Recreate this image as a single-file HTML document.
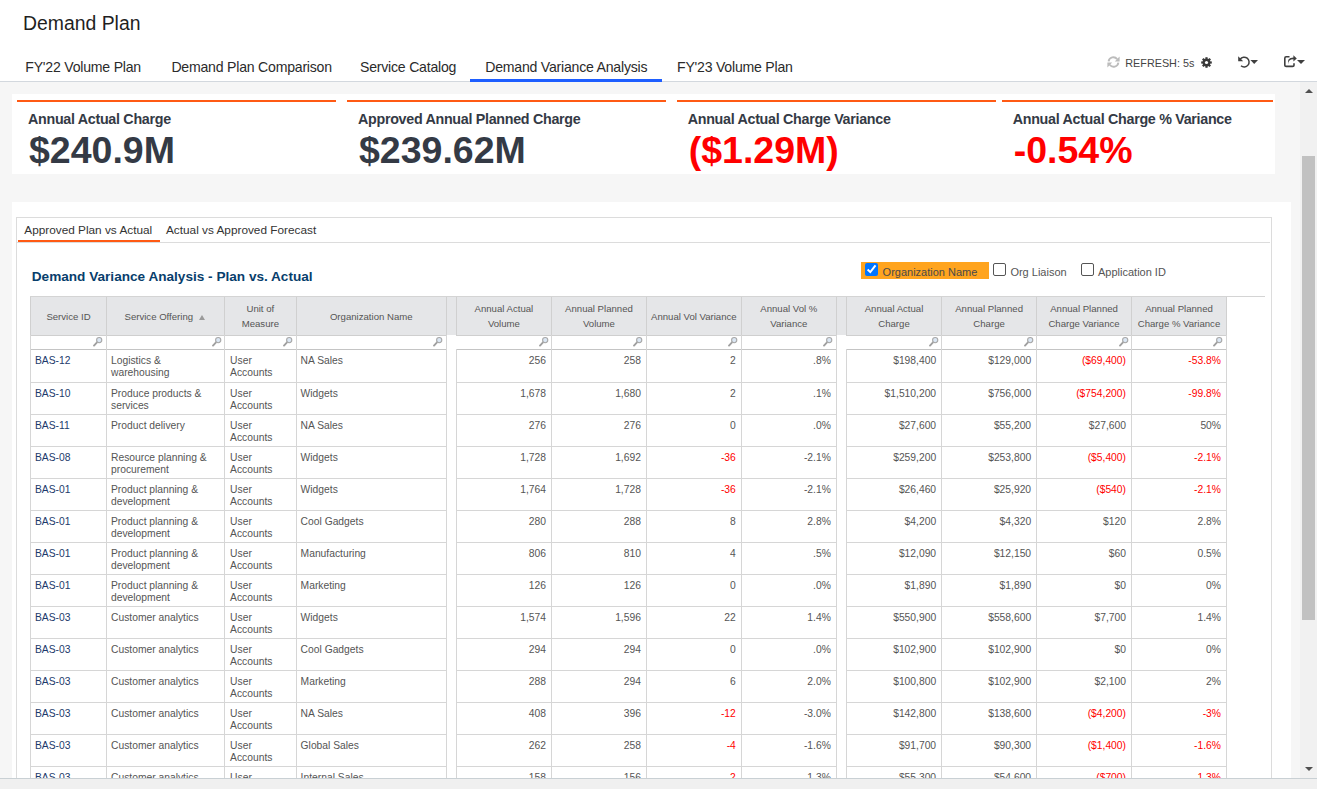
<!DOCTYPE html>
<html><head><meta charset="utf-8"><style>
html,body{margin:0;padding:0;}
body{width:1317px;height:789px;overflow:hidden;position:relative;font-family:"Liberation Sans", sans-serif;background:#fff;}
body>div{position:absolute;box-sizing:content-box;}
.t{white-space:nowrap;}
</style></head><body>
<div style="left:0px;top:0px;width:1317px;height:81px;background:#ffffff;"></div>
<div style="left:0px;top:81px;width:1317px;height:1px;background:#d3d8de;"></div>
<div style="left:0px;top:82px;width:1300px;height:696px;background:#f6f6f6;"></div>
<div style="left:1300px;top:82px;width:17px;height:696px;background:#f1f1f1;"></div>
<div style="left:1302px;top:156px;width:13px;height:464px;background:#c1c1c1;"></div>
<div style="left:1304.5px;top:88.5px;width:0;height:0;border-left:4px solid transparent;border-right:4px solid transparent;border-bottom:4.5px solid #505050;background:transparent"></div>
<div style="left:1304.5px;top:766.5px;width:0;height:0;border-left:4px solid transparent;border-right:4px solid transparent;border-top:4.5px solid #505050;background:transparent"></div>
<div id="title" class="t" style="left:23px;top:14.08px;font-size:19.4px;line-height:19.4px;color:#1f1f1f;font-weight:normal;">Demand Plan</div>
<div id="tab0" class="t" style="left:25.3px;top:60.46px;font-size:14.1px;line-height:14.1px;color:#2b2b2b;font-weight:normal;letter-spacing:-0.22px">FY'22 Volume Plan</div>
<div id="tab1" class="t" style="left:171.4px;top:60.46px;font-size:14.1px;line-height:14.1px;color:#2b2b2b;font-weight:normal;letter-spacing:-0.22px">Demand Plan Comparison</div>
<div id="tab2" class="t" style="left:360px;top:60.46px;font-size:14.1px;line-height:14.1px;color:#2b2b2b;font-weight:normal;letter-spacing:-0.22px">Service Catalog</div>
<div id="tab3" class="t" style="left:485.2px;top:60.46px;font-size:14.1px;line-height:14.1px;color:#2b2b2b;font-weight:normal;letter-spacing:-0.22px">Demand Variance Analysis</div>
<div id="tab4" class="t" style="left:677px;top:60.46px;font-size:14.1px;line-height:14.1px;color:#2b2b2b;font-weight:normal;letter-spacing:-0.22px">FY'23 Volume Plan</div>
<div style="left:470px;top:79px;width:192px;height:3px;background:#1e5eff;"></div>
<div id="refresh" class="t" style="left:1125.3px;top:58.36px;font-size:10.8px;line-height:10.8px;color:#444;font-weight:normal;">REFRESH: 5s</div>
<svg style="position:absolute;left:1107px;top:56px" width="13" height="12" viewBox="0 0 13 12"><path d="M1.6 5.4 A4.8 4.8 0 0 1 10.2 3.2" stroke="#bcbcbc" stroke-width="1.9" fill="none"/><path d="M12.6 0.6 L12.6 5.4 L7.8 5.4 Z" fill="#bcbcbc"/><path d="M11.4 6.6 A4.8 4.8 0 0 1 2.8 8.8" stroke="#bcbcbc" stroke-width="1.9" fill="none"/><path d="M0.4 11.4 L0.4 6.6 L5.2 6.6 Z" fill="#bcbcbc"/></svg>
<svg style="position:absolute;left:1201px;top:57px" width="11" height="11" viewBox="0 0 11 11"><g fill="#3a3a3a" transform="translate(5.5 5.5)"><circle r="3.9"/><rect x="-1.1" y="-5.3" width="2.2" height="10.6"/><rect x="-5.3" y="-1.1" width="10.6" height="2.2"/><rect x="-1.1" y="-5.3" width="2.2" height="10.6" transform="rotate(45)"/><rect x="-1.1" y="-5.3" width="2.2" height="10.6" transform="rotate(-45)"/></g><circle cx="5.5" cy="5.5" r="1.6" fill="#fff"/></svg>
<svg style="position:absolute;left:1237px;top:55px" width="22" height="14" viewBox="0 0 22 14"><path d="M3.2 4.2 A4.9 4.9 0 1 1 4.0 10.8" stroke="#3f3f3f" stroke-width="1.5" fill="none"/><path d="M1.2 1.2 L1.2 6.2 L6.2 6.2 Z" fill="#3f3f3f"/><path d="M13.4 5.0 L21 5.0 L17.2 9.0 Z" fill="#3f3f3f"/></svg>
<svg style="position:absolute;left:1283px;top:54px" width="23" height="14" viewBox="0 0 23 14"><path d="M6.5 2.8 L3.2 2.8 Q1.8 2.8 1.8 4.2 L1.8 11.2 Q1.8 12.4 3.2 12.4 L9.6 12.4 Q11 12.4 11 11.2 L11 9.2" stroke="#3f3f3f" stroke-width="1.6" fill="none"/><path d="M5.2 10.2 Q5.2 5.2 10.4 5.2 L10.4 7.6 L13.8 4.4 L10.4 1.2 L10.4 3.4 Q3.6 3.4 5.2 10.2 Z" fill="#3f3f3f"/><path d="M14 6.0 L22 6.0 L18 10.0 Z" fill="#3f3f3f"/></svg>
<div style="left:12px;top:94px;width:1263px;height:80px;background:#ffffff;"></div>
<div style="left:17px;top:100px;width:319px;height:2px;background:#ff5a14;"></div>
<div id="kl0" class="t" style="left:28px;top:111.7px;font-size:14.3px;line-height:14.3px;color:#343a45;font-weight:bold;letter-spacing:-0.3px">Annual Actual Charge</div>
<div id="kv0" class="t" style="left:29px;top:131.76px;font-size:37.5px;line-height:37.5px;color:#343a45;font-weight:bold;">$240.9M</div>
<div style="left:347px;top:100px;width:319px;height:2px;background:#ff5a14;"></div>
<div id="kl1" class="t" style="left:358px;top:111.7px;font-size:14.3px;line-height:14.3px;color:#343a45;font-weight:bold;letter-spacing:-0.3px">Approved Annual Planned Charge</div>
<div id="kv1" class="t" style="left:359px;top:131.76px;font-size:37.5px;line-height:37.5px;color:#343a45;font-weight:bold;">$239.62M</div>
<div style="left:676.7px;top:100px;width:319px;height:2px;background:#ff5a14;"></div>
<div id="kl2" class="t" style="left:687.7px;top:111.7px;font-size:14.3px;line-height:14.3px;color:#343a45;font-weight:bold;letter-spacing:-0.3px">Annual Actual Charge Variance</div>
<div id="kv2" class="t" style="left:688.7px;top:131.76px;font-size:37.5px;line-height:37.5px;color:#ff0000;font-weight:bold;">($1.29M)</div>
<div style="left:1001.7px;top:100px;width:271.3px;height:2px;background:#ff5a14;"></div>
<div id="kl3" class="t" style="left:1012.7px;top:111.7px;font-size:14.3px;line-height:14.3px;color:#343a45;font-weight:bold;letter-spacing:-0.3px">Annual Actual Charge % Variance</div>
<div id="kv3" class="t" style="left:1013.7px;top:131.76px;font-size:37.5px;line-height:37.5px;color:#ff0000;font-weight:bold;">-0.54%</div>
<div style="left:12px;top:202px;width:1279px;height:576px;background:#ffffff;"></div>
<div style="left:16px;top:217px;width:1254px;height:600px;border:1px solid #dcdcdc;background:transparent"></div>
<div style="left:17px;top:242px;width:1253px;height:1px;background:#dcdcdc;"></div>
<div style="left:18px;top:240px;width:142px;height:2px;background:#ff5a14;"></div>
<div id="itab0" class="t" style="left:24.3px;top:224.81px;font-size:11.8px;line-height:11.8px;color:#333;font-weight:normal;">Approved Plan vs Actual</div>
<div id="itab1" class="t" style="left:166px;top:224.81px;font-size:11.8px;line-height:11.8px;color:#333;font-weight:normal;">Actual vs Approved Forecast</div>
<div id="sectitle" class="t" style="left:31.8px;top:269.99px;font-size:13.6px;line-height:13.6px;color:#083e6c;font-weight:bold;">Demand Variance Analysis - Plan vs. Actual</div>
<div style="left:861px;top:262px;width:128px;height:17px;background:#ffa41e;"></div>
<div style="left:865px;top:263px;width:13px;height:13px;background:#0075ff;border-radius:2px"></div>
<svg style="position:absolute;left:865px;top:263px" width="13" height="13"><path d="M2.6 6.5 L5.3 9.1 L10.5 2.4" stroke="#fff" stroke-width="2" fill="none"/></svg>
<div id="cb0" class="t" style="left:882.6px;top:266.99px;font-size:11px;line-height:11px;color:#4a4a4a;font-weight:normal;">Organization Name</div>
<div style="left:993px;top:263px;width:11px;height:11px;border:1px solid #555;border-radius:2px;background:#fff"></div>
<div id="cb1" class="t" style="left:1010.4px;top:266.99px;font-size:11px;line-height:11px;color:#555;font-weight:normal;">Org Liaison</div>
<div style="left:1081px;top:263px;width:11px;height:11px;border:1px solid #555;border-radius:2px;background:#fff"></div>
<div id="cb2" class="t" style="left:1098px;top:266.99px;font-size:11px;line-height:11px;color:#555;font-weight:normal;">Application ID</div>
<div style="left:30px;top:296px;width:1197px;height:39px;background:#e5e6e8;"></div>
<div style="left:30px;top:296px;width:1px;height:39px;background:#d0d0d0;"></div>
<div style="left:106px;top:296px;width:1px;height:39px;background:#d0d0d0;"></div>
<div style="left:224px;top:296px;width:1px;height:39px;background:#d0d0d0;"></div>
<div style="left:296px;top:296px;width:1px;height:39px;background:#d0d0d0;"></div>
<div style="left:446px;top:296px;width:1px;height:39px;background:#d0d0d0;"></div>
<div style="left:456px;top:296px;width:1px;height:39px;background:#d0d0d0;"></div>
<div style="left:551px;top:296px;width:1px;height:39px;background:#d0d0d0;"></div>
<div style="left:646px;top:296px;width:1px;height:39px;background:#d0d0d0;"></div>
<div style="left:741px;top:296px;width:1px;height:39px;background:#d0d0d0;"></div>
<div style="left:836px;top:296px;width:1px;height:39px;background:#d0d0d0;"></div>
<div style="left:846px;top:296px;width:1px;height:39px;background:#d0d0d0;"></div>
<div style="left:941px;top:296px;width:1px;height:39px;background:#d0d0d0;"></div>
<div style="left:1036px;top:296px;width:1px;height:39px;background:#d0d0d0;"></div>
<div style="left:1131px;top:296px;width:1px;height:39px;background:#d0d0d0;"></div>
<div style="left:1226px;top:296px;width:1px;height:39px;background:#d0d0d0;"></div>
<div style="left:30px;top:296px;width:1235px;height:1px;background:#d4d4d4;"></div>
<div class="t" style="left:30.5px;width:76.0px;text-align:center;top:312.37px;font-size:9.6px;line-height:9.6px;color:#555;font-weight:normal;">Service ID</div>
<div class="t" style="left:124.5px;top:312.37px;font-size:9.6px;line-height:9.6px;color:#555;font-weight:normal;">Service Offering</div>
<div style="left:199px;top:315px;width:0;height:0;border-left:3.2px solid transparent;border-right:3.2px solid transparent;border-bottom:5px solid #9a9a9a;background:transparent"></div>
<div class="t" style="left:224.60000000000002px;width:71.50000000000003px;text-align:center;top:304.37px;font-size:9.6px;line-height:9.6px;color:#555;font-weight:normal;">Unit of</div>
<div class="t" style="left:224.60000000000002px;width:71.50000000000003px;text-align:center;top:319.37px;font-size:9.6px;line-height:9.6px;color:#555;font-weight:normal;">Measure</div>
<div class="t" style="left:296.1px;width:150.29999999999995px;text-align:center;top:312.37px;font-size:9.6px;line-height:9.6px;color:#555;font-weight:normal;">Organization Name</div>
<div class="t" style="left:456.29999999999995px;width:95.19999999999999px;text-align:center;top:304.37px;font-size:9.6px;line-height:9.6px;color:#555;font-weight:normal;">Annual Actual</div>
<div class="t" style="left:456.29999999999995px;width:95.19999999999999px;text-align:center;top:319.37px;font-size:9.6px;line-height:9.6px;color:#555;font-weight:normal;">Volume</div>
<div class="t" style="left:551.5px;width:94.89999999999998px;text-align:center;top:304.37px;font-size:9.6px;line-height:9.6px;color:#555;font-weight:normal;">Annual Planned</div>
<div class="t" style="left:551.5px;width:94.89999999999998px;text-align:center;top:319.37px;font-size:9.6px;line-height:9.6px;color:#555;font-weight:normal;">Volume</div>
<div class="t" style="left:646.3999999999999px;width:94.89999999999998px;text-align:center;top:312.37px;font-size:9.6px;line-height:9.6px;color:#555;font-weight:normal;">Annual Vol Variance</div>
<div class="t" style="left:741.3px;width:95.0px;text-align:center;top:304.37px;font-size:9.6px;line-height:9.6px;color:#555;font-weight:normal;">Annual Vol %</div>
<div class="t" style="left:741.3px;width:95.0px;text-align:center;top:319.37px;font-size:9.6px;line-height:9.6px;color:#555;font-weight:normal;">Variance</div>
<div class="t" style="left:846.4px;width:95.20000000000005px;text-align:center;top:304.37px;font-size:9.6px;line-height:9.6px;color:#555;font-weight:normal;">Annual Actual</div>
<div class="t" style="left:846.4px;width:95.20000000000005px;text-align:center;top:319.37px;font-size:9.6px;line-height:9.6px;color:#555;font-weight:normal;">Charge</div>
<div class="t" style="left:941.5999999999999px;width:94.99999999999989px;text-align:center;top:304.37px;font-size:9.6px;line-height:9.6px;color:#555;font-weight:normal;">Annual Planned</div>
<div class="t" style="left:941.5999999999999px;width:94.99999999999989px;text-align:center;top:319.37px;font-size:9.6px;line-height:9.6px;color:#555;font-weight:normal;">Charge</div>
<div class="t" style="left:1036.6px;width:94.90000000000009px;text-align:center;top:304.37px;font-size:9.6px;line-height:9.6px;color:#555;font-weight:normal;">Annual Planned</div>
<div class="t" style="left:1036.6px;width:94.90000000000009px;text-align:center;top:319.37px;font-size:9.6px;line-height:9.6px;color:#555;font-weight:normal;">Charge Variance</div>
<div class="t" style="left:1131.5px;width:95.0px;text-align:center;top:304.37px;font-size:9.6px;line-height:9.6px;color:#555;font-weight:normal;">Annual Planned</div>
<div class="t" style="left:1131.5px;width:95.0px;text-align:center;top:319.37px;font-size:9.6px;line-height:9.6px;color:#555;font-weight:normal;">Charge % Variance</div>
<div style="left:30px;top:335px;width:417px;height:1px;background:#cfcfcf;"></div>
<div style="left:456px;top:335px;width:381px;height:1px;background:#cfcfcf;"></div>
<div style="left:846px;top:335px;width:381px;height:1px;background:#cfcfcf;"></div>
<div style="left:30px;top:349px;width:417px;height:1px;background:#c4c4c4;"></div>
<div style="left:456px;top:349px;width:381px;height:1px;background:#c4c4c4;"></div>
<div style="left:846px;top:349px;width:381px;height:1px;background:#c4c4c4;"></div>
<div style="left:30px;top:382px;width:417px;height:1px;background:#d6d6d6;"></div>
<div style="left:456px;top:382px;width:381px;height:1px;background:#d6d6d6;"></div>
<div style="left:846px;top:382px;width:381px;height:1px;background:#d6d6d6;"></div>
<div style="left:30px;top:414px;width:417px;height:1px;background:#d6d6d6;"></div>
<div style="left:456px;top:414px;width:381px;height:1px;background:#d6d6d6;"></div>
<div style="left:846px;top:414px;width:381px;height:1px;background:#d6d6d6;"></div>
<div style="left:30px;top:446px;width:417px;height:1px;background:#d6d6d6;"></div>
<div style="left:456px;top:446px;width:381px;height:1px;background:#d6d6d6;"></div>
<div style="left:846px;top:446px;width:381px;height:1px;background:#d6d6d6;"></div>
<div style="left:30px;top:478px;width:417px;height:1px;background:#d6d6d6;"></div>
<div style="left:456px;top:478px;width:381px;height:1px;background:#d6d6d6;"></div>
<div style="left:846px;top:478px;width:381px;height:1px;background:#d6d6d6;"></div>
<div style="left:30px;top:510px;width:417px;height:1px;background:#d6d6d6;"></div>
<div style="left:456px;top:510px;width:381px;height:1px;background:#d6d6d6;"></div>
<div style="left:846px;top:510px;width:381px;height:1px;background:#d6d6d6;"></div>
<div style="left:30px;top:542px;width:417px;height:1px;background:#d6d6d6;"></div>
<div style="left:456px;top:542px;width:381px;height:1px;background:#d6d6d6;"></div>
<div style="left:846px;top:542px;width:381px;height:1px;background:#d6d6d6;"></div>
<div style="left:30px;top:574px;width:417px;height:1px;background:#d6d6d6;"></div>
<div style="left:456px;top:574px;width:381px;height:1px;background:#d6d6d6;"></div>
<div style="left:846px;top:574px;width:381px;height:1px;background:#d6d6d6;"></div>
<div style="left:30px;top:606px;width:417px;height:1px;background:#d6d6d6;"></div>
<div style="left:456px;top:606px;width:381px;height:1px;background:#d6d6d6;"></div>
<div style="left:846px;top:606px;width:381px;height:1px;background:#d6d6d6;"></div>
<div style="left:30px;top:638px;width:417px;height:1px;background:#d6d6d6;"></div>
<div style="left:456px;top:638px;width:381px;height:1px;background:#d6d6d6;"></div>
<div style="left:846px;top:638px;width:381px;height:1px;background:#d6d6d6;"></div>
<div style="left:30px;top:670px;width:417px;height:1px;background:#d6d6d6;"></div>
<div style="left:456px;top:670px;width:381px;height:1px;background:#d6d6d6;"></div>
<div style="left:846px;top:670px;width:381px;height:1px;background:#d6d6d6;"></div>
<div style="left:30px;top:702px;width:417px;height:1px;background:#d6d6d6;"></div>
<div style="left:456px;top:702px;width:381px;height:1px;background:#d6d6d6;"></div>
<div style="left:846px;top:702px;width:381px;height:1px;background:#d6d6d6;"></div>
<div style="left:30px;top:734px;width:417px;height:1px;background:#d6d6d6;"></div>
<div style="left:456px;top:734px;width:381px;height:1px;background:#d6d6d6;"></div>
<div style="left:846px;top:734px;width:381px;height:1px;background:#d6d6d6;"></div>
<div style="left:30px;top:766px;width:417px;height:1px;background:#d6d6d6;"></div>
<div style="left:456px;top:766px;width:381px;height:1px;background:#d6d6d6;"></div>
<div style="left:846px;top:766px;width:381px;height:1px;background:#d6d6d6;"></div>
<div style="left:30px;top:798px;width:417px;height:1px;background:#d6d6d6;"></div>
<div style="left:456px;top:798px;width:381px;height:1px;background:#d6d6d6;"></div>
<div style="left:846px;top:798px;width:381px;height:1px;background:#d6d6d6;"></div>
<div style="left:30px;top:335px;width:1px;height:443px;background:#d6d6d6;"></div>
<div style="left:106px;top:335px;width:1px;height:443px;background:#d6d6d6;"></div>
<div style="left:224px;top:335px;width:1px;height:443px;background:#d6d6d6;"></div>
<div style="left:296px;top:335px;width:1px;height:443px;background:#d6d6d6;"></div>
<div style="left:446px;top:335px;width:1px;height:443px;background:#d6d6d6;"></div>
<div style="left:456px;top:349px;width:1px;height:429px;background:#d6d6d6;"></div>
<div style="left:551px;top:335px;width:1px;height:443px;background:#d6d6d6;"></div>
<div style="left:646px;top:335px;width:1px;height:443px;background:#d6d6d6;"></div>
<div style="left:741px;top:335px;width:1px;height:443px;background:#d6d6d6;"></div>
<div style="left:836px;top:335px;width:1px;height:443px;background:#d6d6d6;"></div>
<div style="left:846px;top:349px;width:1px;height:429px;background:#d6d6d6;"></div>
<div style="left:941px;top:335px;width:1px;height:443px;background:#d6d6d6;"></div>
<div style="left:1036px;top:335px;width:1px;height:443px;background:#d6d6d6;"></div>
<div style="left:1131px;top:335px;width:1px;height:443px;background:#d6d6d6;"></div>
<div style="left:1226px;top:335px;width:1px;height:443px;background:#d6d6d6;"></div>
<svg style="position:absolute;left:92px;top:336px" width="12" height="12"><path d="M5.0 6.3 L2.0 9.6" stroke="#a0a0a0" stroke-width="1.9" stroke-linecap="round"/><circle cx="7.2" cy="4.1" r="2.6" stroke="#a8a8a8" stroke-width="1.1" fill="#dbe7f4"/></svg>
<svg style="position:absolute;left:211px;top:336px" width="12" height="12"><path d="M5.0 6.3 L2.0 9.6" stroke="#a0a0a0" stroke-width="1.9" stroke-linecap="round"/><circle cx="7.2" cy="4.1" r="2.6" stroke="#a8a8a8" stroke-width="1.1" fill="#dbe7f4"/></svg>
<svg style="position:absolute;left:282px;top:336px" width="12" height="12"><path d="M5.0 6.3 L2.0 9.6" stroke="#a0a0a0" stroke-width="1.9" stroke-linecap="round"/><circle cx="7.2" cy="4.1" r="2.6" stroke="#a8a8a8" stroke-width="1.1" fill="#dbe7f4"/></svg>
<svg style="position:absolute;left:432px;top:336px" width="12" height="12"><path d="M5.0 6.3 L2.0 9.6" stroke="#a0a0a0" stroke-width="1.9" stroke-linecap="round"/><circle cx="7.2" cy="4.1" r="2.6" stroke="#a8a8a8" stroke-width="1.1" fill="#dbe7f4"/></svg>
<svg style="position:absolute;left:538px;top:336px" width="12" height="12"><path d="M5.0 6.3 L2.0 9.6" stroke="#a0a0a0" stroke-width="1.9" stroke-linecap="round"/><circle cx="7.2" cy="4.1" r="2.6" stroke="#a8a8a8" stroke-width="1.1" fill="#dbe7f4"/></svg>
<svg style="position:absolute;left:632px;top:336px" width="12" height="12"><path d="M5.0 6.3 L2.0 9.6" stroke="#a0a0a0" stroke-width="1.9" stroke-linecap="round"/><circle cx="7.2" cy="4.1" r="2.6" stroke="#a8a8a8" stroke-width="1.1" fill="#dbe7f4"/></svg>
<svg style="position:absolute;left:727px;top:336px" width="12" height="12"><path d="M5.0 6.3 L2.0 9.6" stroke="#a0a0a0" stroke-width="1.9" stroke-linecap="round"/><circle cx="7.2" cy="4.1" r="2.6" stroke="#a8a8a8" stroke-width="1.1" fill="#dbe7f4"/></svg>
<svg style="position:absolute;left:822px;top:336px" width="12" height="12"><path d="M5.0 6.3 L2.0 9.6" stroke="#a0a0a0" stroke-width="1.9" stroke-linecap="round"/><circle cx="7.2" cy="4.1" r="2.6" stroke="#a8a8a8" stroke-width="1.1" fill="#dbe7f4"/></svg>
<svg style="position:absolute;left:928px;top:336px" width="12" height="12"><path d="M5.0 6.3 L2.0 9.6" stroke="#a0a0a0" stroke-width="1.9" stroke-linecap="round"/><circle cx="7.2" cy="4.1" r="2.6" stroke="#a8a8a8" stroke-width="1.1" fill="#dbe7f4"/></svg>
<svg style="position:absolute;left:1023px;top:336px" width="12" height="12"><path d="M5.0 6.3 L2.0 9.6" stroke="#a0a0a0" stroke-width="1.9" stroke-linecap="round"/><circle cx="7.2" cy="4.1" r="2.6" stroke="#a8a8a8" stroke-width="1.1" fill="#dbe7f4"/></svg>
<svg style="position:absolute;left:1118px;top:336px" width="12" height="12"><path d="M5.0 6.3 L2.0 9.6" stroke="#a0a0a0" stroke-width="1.9" stroke-linecap="round"/><circle cx="7.2" cy="4.1" r="2.6" stroke="#a8a8a8" stroke-width="1.1" fill="#dbe7f4"/></svg>
<svg style="position:absolute;left:1212px;top:336px" width="12" height="12"><path d="M5.0 6.3 L2.0 9.6" stroke="#a0a0a0" stroke-width="1.9" stroke-linecap="round"/><circle cx="7.2" cy="4.1" r="2.6" stroke="#a8a8a8" stroke-width="1.1" fill="#dbe7f4"/></svg>
<div class="t" style="left:35.0px;top:355.78px;font-size:10.3px;line-height:10.3px;color:#1c3a6b;font-weight:normal;">BAS-12</div>
<div class="t" style="left:111.0px;top:355.78px;font-size:10.3px;line-height:10.3px;color:#555;font-weight:normal;">Logistics &amp;</div>
<div class="t" style="left:111.0px;top:367.78px;font-size:10.3px;line-height:10.3px;color:#555;font-weight:normal;">warehousing</div>
<div class="t" style="left:230.1px;top:355.78px;font-size:10.3px;line-height:10.3px;color:#555;font-weight:normal;">User</div>
<div class="t" style="left:230.1px;top:367.78px;font-size:10.3px;line-height:10.3px;color:#555;font-weight:normal;">Accounts</div>
<div class="t" style="left:300.6px;top:355.78px;font-size:10.3px;line-height:10.3px;color:#555;font-weight:normal;">NA Sales</div>
<div class="t" style="right:771.0px;top:355.78px;font-size:10.3px;line-height:10.3px;color:#555;font-weight:normal;">256</div>
<div class="t" style="right:676.1px;top:355.78px;font-size:10.3px;line-height:10.3px;color:#555;font-weight:normal;">258</div>
<div class="t" style="right:581.2px;top:355.78px;font-size:10.3px;line-height:10.3px;color:#555;font-weight:normal;">2</div>
<div class="t" style="right:486.20000000000005px;top:355.78px;font-size:10.3px;line-height:10.3px;color:#555;font-weight:normal;">.8%</div>
<div class="t" style="right:380.9px;top:355.78px;font-size:10.3px;line-height:10.3px;color:#555;font-weight:normal;">$198,400</div>
<div class="t" style="right:285.9000000000001px;top:355.78px;font-size:10.3px;line-height:10.3px;color:#555;font-weight:normal;">$129,000</div>
<div class="t" style="right:191.0px;top:355.78px;font-size:10.3px;line-height:10.3px;color:#ff0000;font-weight:normal;">($69,400)</div>
<div class="t" style="right:96.0px;top:355.78px;font-size:10.3px;line-height:10.3px;color:#ff0000;font-weight:normal;">-53.8%</div>
<div class="t" style="left:35.0px;top:388.78px;font-size:10.3px;line-height:10.3px;color:#1c3a6b;font-weight:normal;">BAS-10</div>
<div class="t" style="left:111.0px;top:388.78px;font-size:10.3px;line-height:10.3px;color:#555;font-weight:normal;">Produce products &amp;</div>
<div class="t" style="left:111.0px;top:400.78px;font-size:10.3px;line-height:10.3px;color:#555;font-weight:normal;">services</div>
<div class="t" style="left:230.1px;top:388.78px;font-size:10.3px;line-height:10.3px;color:#555;font-weight:normal;">User</div>
<div class="t" style="left:230.1px;top:400.78px;font-size:10.3px;line-height:10.3px;color:#555;font-weight:normal;">Accounts</div>
<div class="t" style="left:300.6px;top:388.78px;font-size:10.3px;line-height:10.3px;color:#555;font-weight:normal;">Widgets</div>
<div class="t" style="right:771.0px;top:388.78px;font-size:10.3px;line-height:10.3px;color:#555;font-weight:normal;">1,678</div>
<div class="t" style="right:676.1px;top:388.78px;font-size:10.3px;line-height:10.3px;color:#555;font-weight:normal;">1,680</div>
<div class="t" style="right:581.2px;top:388.78px;font-size:10.3px;line-height:10.3px;color:#555;font-weight:normal;">2</div>
<div class="t" style="right:486.20000000000005px;top:388.78px;font-size:10.3px;line-height:10.3px;color:#555;font-weight:normal;">.1%</div>
<div class="t" style="right:380.9px;top:388.78px;font-size:10.3px;line-height:10.3px;color:#555;font-weight:normal;">$1,510,200</div>
<div class="t" style="right:285.9000000000001px;top:388.78px;font-size:10.3px;line-height:10.3px;color:#555;font-weight:normal;">$756,000</div>
<div class="t" style="right:191.0px;top:388.78px;font-size:10.3px;line-height:10.3px;color:#ff0000;font-weight:normal;">($754,200)</div>
<div class="t" style="right:96.0px;top:388.78px;font-size:10.3px;line-height:10.3px;color:#ff0000;font-weight:normal;">-99.8%</div>
<div class="t" style="left:35.0px;top:420.78px;font-size:10.3px;line-height:10.3px;color:#1c3a6b;font-weight:normal;">BAS-11</div>
<div class="t" style="left:111.0px;top:420.78px;font-size:10.3px;line-height:10.3px;color:#555;font-weight:normal;">Product delivery</div>
<div class="t" style="left:230.1px;top:420.78px;font-size:10.3px;line-height:10.3px;color:#555;font-weight:normal;">User</div>
<div class="t" style="left:230.1px;top:432.78px;font-size:10.3px;line-height:10.3px;color:#555;font-weight:normal;">Accounts</div>
<div class="t" style="left:300.6px;top:420.78px;font-size:10.3px;line-height:10.3px;color:#555;font-weight:normal;">NA Sales</div>
<div class="t" style="right:771.0px;top:420.78px;font-size:10.3px;line-height:10.3px;color:#555;font-weight:normal;">276</div>
<div class="t" style="right:676.1px;top:420.78px;font-size:10.3px;line-height:10.3px;color:#555;font-weight:normal;">276</div>
<div class="t" style="right:581.2px;top:420.78px;font-size:10.3px;line-height:10.3px;color:#555;font-weight:normal;">0</div>
<div class="t" style="right:486.20000000000005px;top:420.78px;font-size:10.3px;line-height:10.3px;color:#555;font-weight:normal;">.0%</div>
<div class="t" style="right:380.9px;top:420.78px;font-size:10.3px;line-height:10.3px;color:#555;font-weight:normal;">$27,600</div>
<div class="t" style="right:285.9000000000001px;top:420.78px;font-size:10.3px;line-height:10.3px;color:#555;font-weight:normal;">$55,200</div>
<div class="t" style="right:191.0px;top:420.78px;font-size:10.3px;line-height:10.3px;color:#555;font-weight:normal;">$27,600</div>
<div class="t" style="right:96.0px;top:420.78px;font-size:10.3px;line-height:10.3px;color:#555;font-weight:normal;">50%</div>
<div class="t" style="left:35.0px;top:452.78px;font-size:10.3px;line-height:10.3px;color:#1c3a6b;font-weight:normal;">BAS-08</div>
<div class="t" style="left:111.0px;top:452.78px;font-size:10.3px;line-height:10.3px;color:#555;font-weight:normal;">Resource planning &amp;</div>
<div class="t" style="left:111.0px;top:464.78px;font-size:10.3px;line-height:10.3px;color:#555;font-weight:normal;">procurement</div>
<div class="t" style="left:230.1px;top:452.78px;font-size:10.3px;line-height:10.3px;color:#555;font-weight:normal;">User</div>
<div class="t" style="left:230.1px;top:464.78px;font-size:10.3px;line-height:10.3px;color:#555;font-weight:normal;">Accounts</div>
<div class="t" style="left:300.6px;top:452.78px;font-size:10.3px;line-height:10.3px;color:#555;font-weight:normal;">Widgets</div>
<div class="t" style="right:771.0px;top:452.78px;font-size:10.3px;line-height:10.3px;color:#555;font-weight:normal;">1,728</div>
<div class="t" style="right:676.1px;top:452.78px;font-size:10.3px;line-height:10.3px;color:#555;font-weight:normal;">1,692</div>
<div class="t" style="right:581.2px;top:452.78px;font-size:10.3px;line-height:10.3px;color:#ff0000;font-weight:normal;">-36</div>
<div class="t" style="right:486.20000000000005px;top:452.78px;font-size:10.3px;line-height:10.3px;color:#555;font-weight:normal;">-2.1%</div>
<div class="t" style="right:380.9px;top:452.78px;font-size:10.3px;line-height:10.3px;color:#555;font-weight:normal;">$259,200</div>
<div class="t" style="right:285.9000000000001px;top:452.78px;font-size:10.3px;line-height:10.3px;color:#555;font-weight:normal;">$253,800</div>
<div class="t" style="right:191.0px;top:452.78px;font-size:10.3px;line-height:10.3px;color:#ff0000;font-weight:normal;">($5,400)</div>
<div class="t" style="right:96.0px;top:452.78px;font-size:10.3px;line-height:10.3px;color:#ff0000;font-weight:normal;">-2.1%</div>
<div class="t" style="left:35.0px;top:484.78px;font-size:10.3px;line-height:10.3px;color:#1c3a6b;font-weight:normal;">BAS-01</div>
<div class="t" style="left:111.0px;top:484.78px;font-size:10.3px;line-height:10.3px;color:#555;font-weight:normal;">Product planning &amp;</div>
<div class="t" style="left:111.0px;top:496.78px;font-size:10.3px;line-height:10.3px;color:#555;font-weight:normal;">development</div>
<div class="t" style="left:230.1px;top:484.78px;font-size:10.3px;line-height:10.3px;color:#555;font-weight:normal;">User</div>
<div class="t" style="left:230.1px;top:496.78px;font-size:10.3px;line-height:10.3px;color:#555;font-weight:normal;">Accounts</div>
<div class="t" style="left:300.6px;top:484.78px;font-size:10.3px;line-height:10.3px;color:#555;font-weight:normal;">Widgets</div>
<div class="t" style="right:771.0px;top:484.78px;font-size:10.3px;line-height:10.3px;color:#555;font-weight:normal;">1,764</div>
<div class="t" style="right:676.1px;top:484.78px;font-size:10.3px;line-height:10.3px;color:#555;font-weight:normal;">1,728</div>
<div class="t" style="right:581.2px;top:484.78px;font-size:10.3px;line-height:10.3px;color:#ff0000;font-weight:normal;">-36</div>
<div class="t" style="right:486.20000000000005px;top:484.78px;font-size:10.3px;line-height:10.3px;color:#555;font-weight:normal;">-2.1%</div>
<div class="t" style="right:380.9px;top:484.78px;font-size:10.3px;line-height:10.3px;color:#555;font-weight:normal;">$26,460</div>
<div class="t" style="right:285.9000000000001px;top:484.78px;font-size:10.3px;line-height:10.3px;color:#555;font-weight:normal;">$25,920</div>
<div class="t" style="right:191.0px;top:484.78px;font-size:10.3px;line-height:10.3px;color:#ff0000;font-weight:normal;">($540)</div>
<div class="t" style="right:96.0px;top:484.78px;font-size:10.3px;line-height:10.3px;color:#ff0000;font-weight:normal;">-2.1%</div>
<div class="t" style="left:35.0px;top:516.78px;font-size:10.3px;line-height:10.3px;color:#1c3a6b;font-weight:normal;">BAS-01</div>
<div class="t" style="left:111.0px;top:516.78px;font-size:10.3px;line-height:10.3px;color:#555;font-weight:normal;">Product planning &amp;</div>
<div class="t" style="left:111.0px;top:528.78px;font-size:10.3px;line-height:10.3px;color:#555;font-weight:normal;">development</div>
<div class="t" style="left:230.1px;top:516.78px;font-size:10.3px;line-height:10.3px;color:#555;font-weight:normal;">User</div>
<div class="t" style="left:230.1px;top:528.78px;font-size:10.3px;line-height:10.3px;color:#555;font-weight:normal;">Accounts</div>
<div class="t" style="left:300.6px;top:516.78px;font-size:10.3px;line-height:10.3px;color:#555;font-weight:normal;">Cool Gadgets</div>
<div class="t" style="right:771.0px;top:516.78px;font-size:10.3px;line-height:10.3px;color:#555;font-weight:normal;">280</div>
<div class="t" style="right:676.1px;top:516.78px;font-size:10.3px;line-height:10.3px;color:#555;font-weight:normal;">288</div>
<div class="t" style="right:581.2px;top:516.78px;font-size:10.3px;line-height:10.3px;color:#555;font-weight:normal;">8</div>
<div class="t" style="right:486.20000000000005px;top:516.78px;font-size:10.3px;line-height:10.3px;color:#555;font-weight:normal;">2.8%</div>
<div class="t" style="right:380.9px;top:516.78px;font-size:10.3px;line-height:10.3px;color:#555;font-weight:normal;">$4,200</div>
<div class="t" style="right:285.9000000000001px;top:516.78px;font-size:10.3px;line-height:10.3px;color:#555;font-weight:normal;">$4,320</div>
<div class="t" style="right:191.0px;top:516.78px;font-size:10.3px;line-height:10.3px;color:#555;font-weight:normal;">$120</div>
<div class="t" style="right:96.0px;top:516.78px;font-size:10.3px;line-height:10.3px;color:#555;font-weight:normal;">2.8%</div>
<div class="t" style="left:35.0px;top:548.78px;font-size:10.3px;line-height:10.3px;color:#1c3a6b;font-weight:normal;">BAS-01</div>
<div class="t" style="left:111.0px;top:548.78px;font-size:10.3px;line-height:10.3px;color:#555;font-weight:normal;">Product planning &amp;</div>
<div class="t" style="left:111.0px;top:560.78px;font-size:10.3px;line-height:10.3px;color:#555;font-weight:normal;">development</div>
<div class="t" style="left:230.1px;top:548.78px;font-size:10.3px;line-height:10.3px;color:#555;font-weight:normal;">User</div>
<div class="t" style="left:230.1px;top:560.78px;font-size:10.3px;line-height:10.3px;color:#555;font-weight:normal;">Accounts</div>
<div class="t" style="left:300.6px;top:548.78px;font-size:10.3px;line-height:10.3px;color:#555;font-weight:normal;">Manufacturing</div>
<div class="t" style="right:771.0px;top:548.78px;font-size:10.3px;line-height:10.3px;color:#555;font-weight:normal;">806</div>
<div class="t" style="right:676.1px;top:548.78px;font-size:10.3px;line-height:10.3px;color:#555;font-weight:normal;">810</div>
<div class="t" style="right:581.2px;top:548.78px;font-size:10.3px;line-height:10.3px;color:#555;font-weight:normal;">4</div>
<div class="t" style="right:486.20000000000005px;top:548.78px;font-size:10.3px;line-height:10.3px;color:#555;font-weight:normal;">.5%</div>
<div class="t" style="right:380.9px;top:548.78px;font-size:10.3px;line-height:10.3px;color:#555;font-weight:normal;">$12,090</div>
<div class="t" style="right:285.9000000000001px;top:548.78px;font-size:10.3px;line-height:10.3px;color:#555;font-weight:normal;">$12,150</div>
<div class="t" style="right:191.0px;top:548.78px;font-size:10.3px;line-height:10.3px;color:#555;font-weight:normal;">$60</div>
<div class="t" style="right:96.0px;top:548.78px;font-size:10.3px;line-height:10.3px;color:#555;font-weight:normal;">0.5%</div>
<div class="t" style="left:35.0px;top:580.78px;font-size:10.3px;line-height:10.3px;color:#1c3a6b;font-weight:normal;">BAS-01</div>
<div class="t" style="left:111.0px;top:580.78px;font-size:10.3px;line-height:10.3px;color:#555;font-weight:normal;">Product planning &amp;</div>
<div class="t" style="left:111.0px;top:592.78px;font-size:10.3px;line-height:10.3px;color:#555;font-weight:normal;">development</div>
<div class="t" style="left:230.1px;top:580.78px;font-size:10.3px;line-height:10.3px;color:#555;font-weight:normal;">User</div>
<div class="t" style="left:230.1px;top:592.78px;font-size:10.3px;line-height:10.3px;color:#555;font-weight:normal;">Accounts</div>
<div class="t" style="left:300.6px;top:580.78px;font-size:10.3px;line-height:10.3px;color:#555;font-weight:normal;">Marketing</div>
<div class="t" style="right:771.0px;top:580.78px;font-size:10.3px;line-height:10.3px;color:#555;font-weight:normal;">126</div>
<div class="t" style="right:676.1px;top:580.78px;font-size:10.3px;line-height:10.3px;color:#555;font-weight:normal;">126</div>
<div class="t" style="right:581.2px;top:580.78px;font-size:10.3px;line-height:10.3px;color:#555;font-weight:normal;">0</div>
<div class="t" style="right:486.20000000000005px;top:580.78px;font-size:10.3px;line-height:10.3px;color:#555;font-weight:normal;">.0%</div>
<div class="t" style="right:380.9px;top:580.78px;font-size:10.3px;line-height:10.3px;color:#555;font-weight:normal;">$1,890</div>
<div class="t" style="right:285.9000000000001px;top:580.78px;font-size:10.3px;line-height:10.3px;color:#555;font-weight:normal;">$1,890</div>
<div class="t" style="right:191.0px;top:580.78px;font-size:10.3px;line-height:10.3px;color:#555;font-weight:normal;">$0</div>
<div class="t" style="right:96.0px;top:580.78px;font-size:10.3px;line-height:10.3px;color:#555;font-weight:normal;">0%</div>
<div class="t" style="left:35.0px;top:612.78px;font-size:10.3px;line-height:10.3px;color:#1c3a6b;font-weight:normal;">BAS-03</div>
<div class="t" style="left:111.0px;top:612.78px;font-size:10.3px;line-height:10.3px;color:#555;font-weight:normal;">Customer analytics</div>
<div class="t" style="left:230.1px;top:612.78px;font-size:10.3px;line-height:10.3px;color:#555;font-weight:normal;">User</div>
<div class="t" style="left:230.1px;top:624.78px;font-size:10.3px;line-height:10.3px;color:#555;font-weight:normal;">Accounts</div>
<div class="t" style="left:300.6px;top:612.78px;font-size:10.3px;line-height:10.3px;color:#555;font-weight:normal;">Widgets</div>
<div class="t" style="right:771.0px;top:612.78px;font-size:10.3px;line-height:10.3px;color:#555;font-weight:normal;">1,574</div>
<div class="t" style="right:676.1px;top:612.78px;font-size:10.3px;line-height:10.3px;color:#555;font-weight:normal;">1,596</div>
<div class="t" style="right:581.2px;top:612.78px;font-size:10.3px;line-height:10.3px;color:#555;font-weight:normal;">22</div>
<div class="t" style="right:486.20000000000005px;top:612.78px;font-size:10.3px;line-height:10.3px;color:#555;font-weight:normal;">1.4%</div>
<div class="t" style="right:380.9px;top:612.78px;font-size:10.3px;line-height:10.3px;color:#555;font-weight:normal;">$550,900</div>
<div class="t" style="right:285.9000000000001px;top:612.78px;font-size:10.3px;line-height:10.3px;color:#555;font-weight:normal;">$558,600</div>
<div class="t" style="right:191.0px;top:612.78px;font-size:10.3px;line-height:10.3px;color:#555;font-weight:normal;">$7,700</div>
<div class="t" style="right:96.0px;top:612.78px;font-size:10.3px;line-height:10.3px;color:#555;font-weight:normal;">1.4%</div>
<div class="t" style="left:35.0px;top:644.78px;font-size:10.3px;line-height:10.3px;color:#1c3a6b;font-weight:normal;">BAS-03</div>
<div class="t" style="left:111.0px;top:644.78px;font-size:10.3px;line-height:10.3px;color:#555;font-weight:normal;">Customer analytics</div>
<div class="t" style="left:230.1px;top:644.78px;font-size:10.3px;line-height:10.3px;color:#555;font-weight:normal;">User</div>
<div class="t" style="left:230.1px;top:656.78px;font-size:10.3px;line-height:10.3px;color:#555;font-weight:normal;">Accounts</div>
<div class="t" style="left:300.6px;top:644.78px;font-size:10.3px;line-height:10.3px;color:#555;font-weight:normal;">Cool Gadgets</div>
<div class="t" style="right:771.0px;top:644.78px;font-size:10.3px;line-height:10.3px;color:#555;font-weight:normal;">294</div>
<div class="t" style="right:676.1px;top:644.78px;font-size:10.3px;line-height:10.3px;color:#555;font-weight:normal;">294</div>
<div class="t" style="right:581.2px;top:644.78px;font-size:10.3px;line-height:10.3px;color:#555;font-weight:normal;">0</div>
<div class="t" style="right:486.20000000000005px;top:644.78px;font-size:10.3px;line-height:10.3px;color:#555;font-weight:normal;">.0%</div>
<div class="t" style="right:380.9px;top:644.78px;font-size:10.3px;line-height:10.3px;color:#555;font-weight:normal;">$102,900</div>
<div class="t" style="right:285.9000000000001px;top:644.78px;font-size:10.3px;line-height:10.3px;color:#555;font-weight:normal;">$102,900</div>
<div class="t" style="right:191.0px;top:644.78px;font-size:10.3px;line-height:10.3px;color:#555;font-weight:normal;">$0</div>
<div class="t" style="right:96.0px;top:644.78px;font-size:10.3px;line-height:10.3px;color:#555;font-weight:normal;">0%</div>
<div class="t" style="left:35.0px;top:676.78px;font-size:10.3px;line-height:10.3px;color:#1c3a6b;font-weight:normal;">BAS-03</div>
<div class="t" style="left:111.0px;top:676.78px;font-size:10.3px;line-height:10.3px;color:#555;font-weight:normal;">Customer analytics</div>
<div class="t" style="left:230.1px;top:676.78px;font-size:10.3px;line-height:10.3px;color:#555;font-weight:normal;">User</div>
<div class="t" style="left:230.1px;top:688.78px;font-size:10.3px;line-height:10.3px;color:#555;font-weight:normal;">Accounts</div>
<div class="t" style="left:300.6px;top:676.78px;font-size:10.3px;line-height:10.3px;color:#555;font-weight:normal;">Marketing</div>
<div class="t" style="right:771.0px;top:676.78px;font-size:10.3px;line-height:10.3px;color:#555;font-weight:normal;">288</div>
<div class="t" style="right:676.1px;top:676.78px;font-size:10.3px;line-height:10.3px;color:#555;font-weight:normal;">294</div>
<div class="t" style="right:581.2px;top:676.78px;font-size:10.3px;line-height:10.3px;color:#555;font-weight:normal;">6</div>
<div class="t" style="right:486.20000000000005px;top:676.78px;font-size:10.3px;line-height:10.3px;color:#555;font-weight:normal;">2.0%</div>
<div class="t" style="right:380.9px;top:676.78px;font-size:10.3px;line-height:10.3px;color:#555;font-weight:normal;">$100,800</div>
<div class="t" style="right:285.9000000000001px;top:676.78px;font-size:10.3px;line-height:10.3px;color:#555;font-weight:normal;">$102,900</div>
<div class="t" style="right:191.0px;top:676.78px;font-size:10.3px;line-height:10.3px;color:#555;font-weight:normal;">$2,100</div>
<div class="t" style="right:96.0px;top:676.78px;font-size:10.3px;line-height:10.3px;color:#555;font-weight:normal;">2%</div>
<div class="t" style="left:35.0px;top:708.78px;font-size:10.3px;line-height:10.3px;color:#1c3a6b;font-weight:normal;">BAS-03</div>
<div class="t" style="left:111.0px;top:708.78px;font-size:10.3px;line-height:10.3px;color:#555;font-weight:normal;">Customer analytics</div>
<div class="t" style="left:230.1px;top:708.78px;font-size:10.3px;line-height:10.3px;color:#555;font-weight:normal;">User</div>
<div class="t" style="left:230.1px;top:720.78px;font-size:10.3px;line-height:10.3px;color:#555;font-weight:normal;">Accounts</div>
<div class="t" style="left:300.6px;top:708.78px;font-size:10.3px;line-height:10.3px;color:#555;font-weight:normal;">NA Sales</div>
<div class="t" style="right:771.0px;top:708.78px;font-size:10.3px;line-height:10.3px;color:#555;font-weight:normal;">408</div>
<div class="t" style="right:676.1px;top:708.78px;font-size:10.3px;line-height:10.3px;color:#555;font-weight:normal;">396</div>
<div class="t" style="right:581.2px;top:708.78px;font-size:10.3px;line-height:10.3px;color:#ff0000;font-weight:normal;">-12</div>
<div class="t" style="right:486.20000000000005px;top:708.78px;font-size:10.3px;line-height:10.3px;color:#555;font-weight:normal;">-3.0%</div>
<div class="t" style="right:380.9px;top:708.78px;font-size:10.3px;line-height:10.3px;color:#555;font-weight:normal;">$142,800</div>
<div class="t" style="right:285.9000000000001px;top:708.78px;font-size:10.3px;line-height:10.3px;color:#555;font-weight:normal;">$138,600</div>
<div class="t" style="right:191.0px;top:708.78px;font-size:10.3px;line-height:10.3px;color:#ff0000;font-weight:normal;">($4,200)</div>
<div class="t" style="right:96.0px;top:708.78px;font-size:10.3px;line-height:10.3px;color:#ff0000;font-weight:normal;">-3%</div>
<div class="t" style="left:35.0px;top:740.78px;font-size:10.3px;line-height:10.3px;color:#1c3a6b;font-weight:normal;">BAS-03</div>
<div class="t" style="left:111.0px;top:740.78px;font-size:10.3px;line-height:10.3px;color:#555;font-weight:normal;">Customer analytics</div>
<div class="t" style="left:230.1px;top:740.78px;font-size:10.3px;line-height:10.3px;color:#555;font-weight:normal;">User</div>
<div class="t" style="left:230.1px;top:752.78px;font-size:10.3px;line-height:10.3px;color:#555;font-weight:normal;">Accounts</div>
<div class="t" style="left:300.6px;top:740.78px;font-size:10.3px;line-height:10.3px;color:#555;font-weight:normal;">Global Sales</div>
<div class="t" style="right:771.0px;top:740.78px;font-size:10.3px;line-height:10.3px;color:#555;font-weight:normal;">262</div>
<div class="t" style="right:676.1px;top:740.78px;font-size:10.3px;line-height:10.3px;color:#555;font-weight:normal;">258</div>
<div class="t" style="right:581.2px;top:740.78px;font-size:10.3px;line-height:10.3px;color:#ff0000;font-weight:normal;">-4</div>
<div class="t" style="right:486.20000000000005px;top:740.78px;font-size:10.3px;line-height:10.3px;color:#555;font-weight:normal;">-1.6%</div>
<div class="t" style="right:380.9px;top:740.78px;font-size:10.3px;line-height:10.3px;color:#555;font-weight:normal;">$91,700</div>
<div class="t" style="right:285.9000000000001px;top:740.78px;font-size:10.3px;line-height:10.3px;color:#555;font-weight:normal;">$90,300</div>
<div class="t" style="right:191.0px;top:740.78px;font-size:10.3px;line-height:10.3px;color:#ff0000;font-weight:normal;">($1,400)</div>
<div class="t" style="right:96.0px;top:740.78px;font-size:10.3px;line-height:10.3px;color:#ff0000;font-weight:normal;">-1.6%</div>
<div class="t" style="left:35.0px;top:772.78px;font-size:10.3px;line-height:10.3px;color:#1c3a6b;font-weight:normal;">BAS-03</div>
<div class="t" style="left:111.0px;top:772.78px;font-size:10.3px;line-height:10.3px;color:#555;font-weight:normal;">Customer analytics</div>
<div class="t" style="left:230.1px;top:772.78px;font-size:10.3px;line-height:10.3px;color:#555;font-weight:normal;">User</div>
<div class="t" style="left:230.1px;top:784.78px;font-size:10.3px;line-height:10.3px;color:#555;font-weight:normal;">Accounts</div>
<div class="t" style="left:300.6px;top:772.78px;font-size:10.3px;line-height:10.3px;color:#555;font-weight:normal;">Internal Sales</div>
<div class="t" style="right:771.0px;top:772.78px;font-size:10.3px;line-height:10.3px;color:#555;font-weight:normal;">158</div>
<div class="t" style="right:676.1px;top:772.78px;font-size:10.3px;line-height:10.3px;color:#555;font-weight:normal;">156</div>
<div class="t" style="right:581.2px;top:772.78px;font-size:10.3px;line-height:10.3px;color:#ff0000;font-weight:normal;">-2</div>
<div class="t" style="right:486.20000000000005px;top:772.78px;font-size:10.3px;line-height:10.3px;color:#555;font-weight:normal;">-1.3%</div>
<div class="t" style="right:380.9px;top:772.78px;font-size:10.3px;line-height:10.3px;color:#555;font-weight:normal;">$55,300</div>
<div class="t" style="right:285.9000000000001px;top:772.78px;font-size:10.3px;line-height:10.3px;color:#555;font-weight:normal;">$54,600</div>
<div class="t" style="right:191.0px;top:772.78px;font-size:10.3px;line-height:10.3px;color:#ff0000;font-weight:normal;">($700)</div>
<div class="t" style="right:96.0px;top:772.78px;font-size:10.3px;line-height:10.3px;color:#ff0000;font-weight:normal;">-1.3%</div>
<div style="left:0px;top:778px;width:1300px;height:1px;background:#c9d0d4;"></div>
<div style="left:0px;top:779px;width:1317px;height:10px;background:#f0f0f0;"></div>
<div style="left:1300px;top:778px;width:17px;height:1px;background:#c9d0d4;"></div>
</body></html>
